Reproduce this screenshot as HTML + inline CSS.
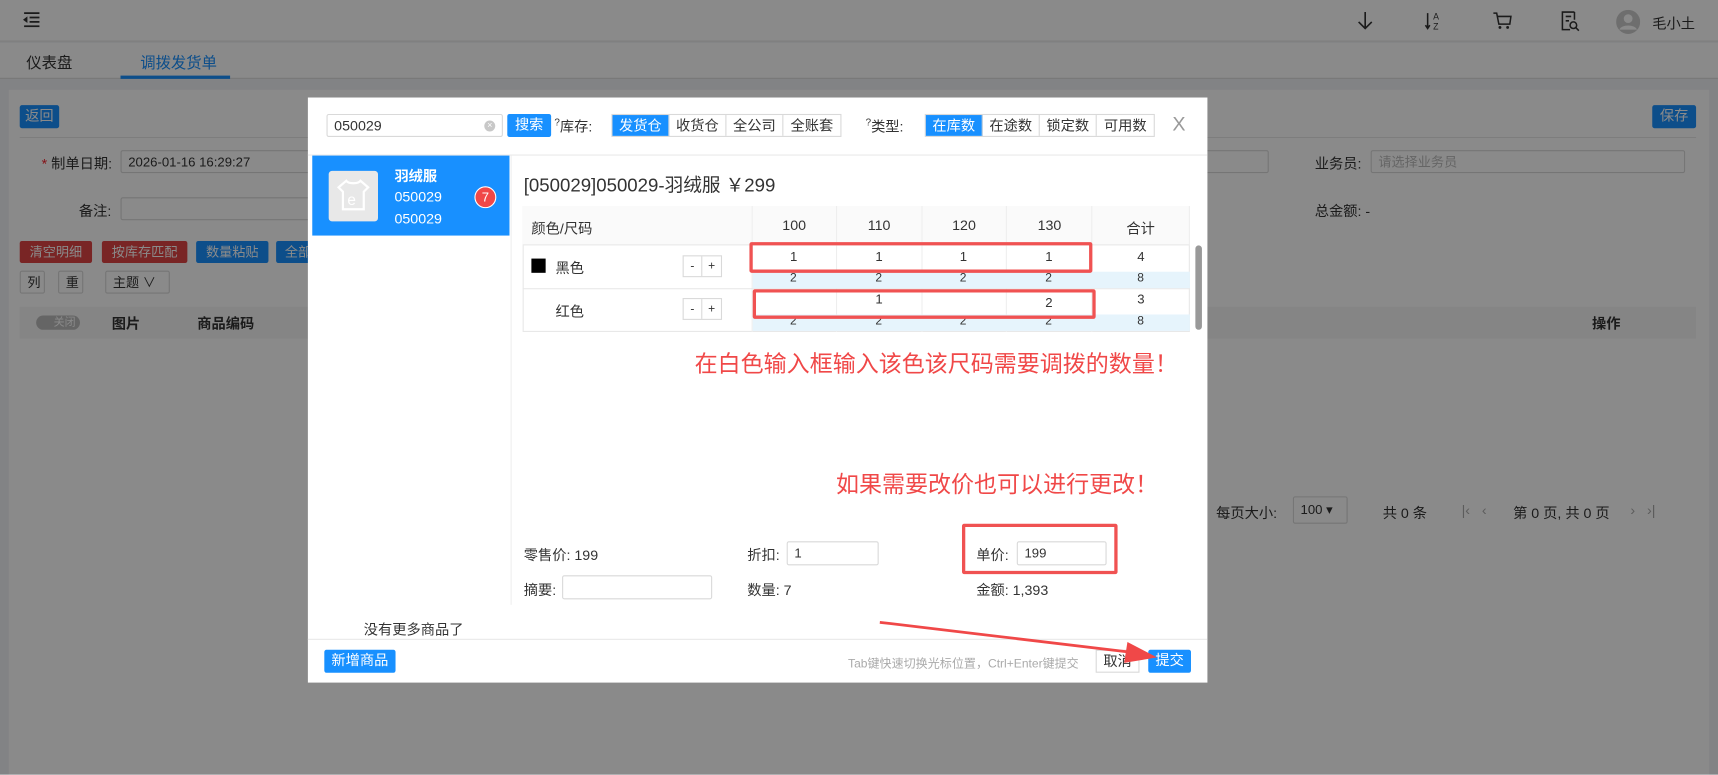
<!DOCTYPE html>
<html><head><meta charset="utf-8"><style>
*{box-sizing:border-box;margin:0;padding:0}
html,body{width:1718px;height:774px;overflow:hidden;background:#f0f2f5}
#w{position:absolute;left:0;top:0;width:1568px;height:707px;transform:scale(1.09566);transform-origin:0 0;font-family:"Liberation Sans","Noto Sans CJK SC",sans-serif;font-size:13px;color:#333}
.a{position:absolute;white-space:nowrap}
.btn{position:absolute;height:20px;line-height:20px;font-size:12px;color:#fff;text-align:center;border-radius:2px}
.blue{background:#1890ff}.red{background:#e04545}
.inp{position:absolute;background:#fff;border:1px solid #d9d9d9;border-radius:2px;height:22px;line-height:20px;padding-left:6px;font-size:12px}
#ov{position:absolute;left:0;top:0;width:1568px;height:707px;background:rgba(0,0,0,.46)}
#m{position:absolute;left:281px;top:89px;width:821px;height:534px;background:#fff}
.seg{position:absolute;top:15px;height:21px;display:flex;border:1px solid #d9d9d9}
.seg div{width:52px;text-align:center;line-height:19px;font-size:13px;border-right:1px solid #d9d9d9}
.seg div:last-child{border-right:none}
.seg .on{background:#1890ff;color:#fff}
.rb{position:absolute;border:3px solid #f05252;border-radius:2px}
</style></head><body><div id="w">
<div class="a" style="left:0;top:0;width:1568px;height:38px;background:#fff;border-bottom:1px solid #e8e8e8"></div>
<svg class="a" style="left:20px;top:11px" width="18" height="14" viewBox="0 0 18 14"><path d="M2 1h14M7 5h9M7 9h9M2 13h14" stroke="#333" stroke-width="1.6"/><path d="M5 4L1 7l4 3z" fill="#333"/></svg>
<svg class="a" style="left:1238px;top:10px" width="16" height="18"><path d="M8 1v15M2 10l6 6 6-6" stroke="#333" stroke-width="1.5" fill="none"/></svg>
<svg class="a" style="left:1299px;top:10px" width="18" height="20"><path d="M4 2v14M2 13l2 3 2-3" stroke="#333" stroke-width="1.4" fill="none"/><text x="9" y="8" font-size="8" fill="#333" font-family="Liberation Sans">A</text><text x="9" y="17" font-size="8" fill="#333" font-family="Liberation Sans">Z</text></svg>
<svg class="a" style="left:1362px;top:11px" width="18" height="16"><path d="M1 1h3l2 10h10l1-7H5" stroke="#333" stroke-width="1.4" fill="none"/><circle cx="7" cy="14" r="1.3" fill="#333"/><circle cx="14" cy="14" r="1.3" fill="#333"/></svg>
<svg class="a" style="left:1424px;top:9px" width="18" height="20"><path d="M13 2H2v16h7M13 2v7M5 6h5M5 10h3" stroke="#333" stroke-width="1.4" fill="none"/><circle cx="12" cy="14" r="3" stroke="#333" stroke-width="1.4" fill="none"/><path d="M14 16l3 3" stroke="#333" stroke-width="1.4"/></svg>
<svg class="a" style="left:1475px;top:9px" width="22" height="22"><circle cx="11" cy="11" r="11" fill="#ccc"/><circle cx="11" cy="8" r="4" fill="#fff"/><path d="M3 18c2-5 14-5 16 0" fill="#fff"/></svg>
<div class="a" style="left:1508px;top:11px;font-size:13px">毛小土</div>
<div class="a" style="left:0;top:39px;width:1568px;height:33px;background:#fff;border-bottom:1px solid #ddd"></div>
<div class="a" style="left:24px;top:47px;font-size:14px">仪表盘</div>
<div class="a" style="left:128px;top:47px;font-size:14px;color:#1890ff">调拨发货单</div>
<div class="a" style="left:110px;top:69px;width:100px;height:3px;background:#1890ff"></div>
<div class="a" style="left:8px;top:82px;width:1552px;height:625px;background:#fff"></div>
<div class="btn blue" style="left:18px;top:96px;width:36px;height:21px;font-size:13px">返回</div>
<div class="btn blue" style="left:1508px;top:96px;width:40px;height:21px;font-size:13px">保存</div>
<div class="a" style="left:18px;top:125px;width:1530px;height:1px;background:#e8e8e8"></div>
<div class="a" style="left:38px;top:139px"><span style="color:#f5222d">*</span> 制单日期:</div>
<div class="inp" style="left:110px;top:137px;width:1048px;height:21px">2026-01-16 16:29:27</div>
<div class="a" style="left:72px;top:182px">备注:</div>
<div class="inp" style="left:110px;top:180px;width:300px;height:21px"></div>
<div class="a" style="left:1200px;top:139px">业务员:</div>
<div class="inp" style="left:1251px;top:137px;width:287px;height:21px;color:#bbb">请选择业务员</div>
<div class="a" style="left:1200px;top:182px">总金额: -</div>
<div class="btn red" style="left:18px;top:220px;width:66px">清空明细</div>
<div class="btn red" style="left:93px;top:220px;width:78px">按库存匹配</div>
<div class="btn blue" style="left:179px;top:220px;width:66px">数量粘贴</div>
<div class="btn blue" style="left:252px;top:220px;width:40px">全部</div>
<div class="inp" style="left:18px;top:247px;width:23px;height:21px;font-size:12px">列</div>
<div class="inp" style="left:53px;top:247px;width:23px;height:21px;font-size:12px">重</div>
<div class="inp" style="left:96px;top:247px;width:59px;height:21px;font-size:12px">主题 ∨</div>
<div class="a" style="left:18px;top:280px;width:1530px;height:29px;background:#f5f5f5"></div>
<div class="a" style="left:33px;top:288px;width:40px;height:13px;border-radius:7px;background:#bbb;color:#fff;font-size:10px;line-height:13px;padding-left:16px">关闭</div>
<div class="a" style="left:102px;top:285px;font-weight:bold">图片</div>
<div class="a" style="left:180px;top:285px;font-weight:bold">商品编码</div>
<div class="a" style="left:1453px;top:285px;font-weight:bold">操作</div>
<div class="a" style="left:1110px;top:458px">每页大小:</div>
<div class="inp" style="left:1180px;top:453px;width:50px;height:25px;line-height:23px">100 ▾</div>
<div class="a" style="left:1262px;top:458px">共 0 条</div>
<div class="a" style="left:1334px;top:458px;color:#aaa">|‹ &nbsp; ‹</div>
<div class="a" style="left:1381px;top:458px">第 0 页, 共 0 页</div>
<div class="a" style="left:1488px;top:458px;color:#aaa">› &nbsp; ›|</div>
<div id="ov"></div>
<div id="m">
<div class="inp" style="left:17px;top:15px;width:161px;height:21px;font-size:13px">050029<span style="position:absolute;right:6px;top:5px;width:10px;height:10px;border-radius:5px;background:#c8c8c8;color:#fff;font-size:8px;line-height:10px;text-align:center">×</span></div>
<div class="btn blue" style="left:182px;top:15px;width:40px;height:21px;font-size:13px">搜索</div>
<div class="a" style="left:225px;top:16px;font-size:13px"><sup style="font-size:9px">?</sup>库存:</div>
<div class="seg" style="left:277px"><div class="on">发货仓</div><div>收货仓</div><div>全公司</div><div>全账套</div></div>
<div class="a" style="left:509px;top:16px;font-size:13px"><sup style="font-size:9px">?</sup>类型:</div>
<div class="seg" style="left:563px"><div class="on">在库数</div><div>在途数</div><div>锁定数</div><div>可用数</div></div>
<div class="a" style="left:789px;top:14px;font-size:18px;color:#999;font-weight:300">X</div>
<div class="a" style="left:0;top:52px;width:821px;height:1px;background:#e8e8e8"></div>
<div class="a" style="left:4px;top:53px;width:180px;height:73px;background:#1890ff"></div>
<div class="a" style="left:19px;top:67px;width:45px;height:46px;background:#e8e8e8;border-radius:3px"></div>
<svg class="a" style="left:25px;top:73px" width="33" height="33"><path d="M10 3l-7 6 4 4v16h19V13l4-4-7-6c-2 3-11 3-13 0z" stroke="#fff" stroke-width="2" fill="none"/><text x="11" y="25" font-size="14" fill="#fff" font-family="Liberation Sans">e</text></svg>
<div class="a" style="left:79px;top:61px;color:#fff;font-weight:bold;font-size:13px">羽绒服</div>
<div class="a" style="left:79px;top:83px;color:#fff;font-size:13px">050029</div>
<div class="a" style="left:79px;top:103px;color:#fff;font-size:13px">050029</div>
<div class="a" style="left:152px;top:81px;width:20px;height:20px;border-radius:10px;background:#f04848;border:1px solid #fff;color:#fff;text-align:center;line-height:18px;font-size:12px">7</div>
<div class="a" style="left:185px;top:53px;width:1px;height:410px;background:#eee"></div>
<div class="a" style="left:197px;top:66px;font-size:17px">[050029]050029-羽绒服 ￥299</div>
<div class="a" style="left:196px;top:99px;width:609px;height:115px;border:1px solid #e8e8e8"></div>
<div class="a" style="left:196px;top:99px;width:609px;height:36px;background:#fafafa;border-bottom:1px solid #e8e8e8"></div>
<div class="a" style="left:204px;top:109px">颜色/尺码</div>
<div class="a" style="left:405px;top:99px;width:1px;height:115px;background:#eee"></div>
<div class="a" style="left:482px;top:99px;width:1px;height:115px;background:#eee"></div>
<div class="a" style="left:560px;top:99px;width:1px;height:115px;background:#eee"></div>
<div class="a" style="left:637px;top:99px;width:1px;height:115px;background:#eee"></div>
<div class="a" style="left:715px;top:99px;width:1px;height:115px;background:#eee"></div>
<div class="a" style="left:804px;top:99px;width:1px;height:36px;background:#eee"></div>
<div class="a" style="left:433px;top:109px">100</div><div class="a" style="left:511px;top:109px">110</div><div class="a" style="left:588px;top:109px">120</div><div class="a" style="left:666px;top:109px">130</div><div class="a" style="left:747px;top:109px">合计</div>
<div class="a" style="left:196px;top:174px;width:609px;height:1px;background:#e8e8e8"></div>
<div class="a" style="left:406px;top:159px;width:399px;height:15px;background:#e6f4fc"></div>
<div class="a" style="left:406px;top:198px;width:399px;height:15px;background:#e6f4fc"></div>
<div class="a" style="left:204px;top:147px;width:13px;height:13px;background:#000"></div>
<div class="a" style="left:226px;top:145px">黑色</div>
<div class="a" style="left:226px;top:185px">红色</div>
<div class="a" style="left:342px;top:144px;width:36px;height:20px;border:1px solid #d9d9d9;display:flex;font-size:11px;line-height:18px;text-align:center"><span style="width:17px;border-right:1px solid #d9d9d9">-</span><span style="width:17px">+</span></div>
<div class="a" style="left:342px;top:183px;width:36px;height:20px;border:1px solid #d9d9d9;display:flex;font-size:11px;line-height:18px;text-align:center"><span style="width:17px;border-right:1px solid #d9d9d9">-</span><span style="width:17px">+</span></div>
<div class="a" style="left:440px;top:138px;font-size:12px">1</div><div class="a" style="left:518px;top:138px;font-size:12px">1</div><div class="a" style="left:595px;top:138px;font-size:12px">1</div><div class="a" style="left:673px;top:138px;font-size:12px">1</div><div class="a" style="left:757px;top:138px;font-size:12px">4</div>
<div class="a" style="left:440px;top:159px;font-size:11px">2</div><div class="a" style="left:518px;top:159px;font-size:11px">2</div><div class="a" style="left:595px;top:159px;font-size:11px">2</div><div class="a" style="left:673px;top:159px;font-size:11px">2</div><div class="a" style="left:757px;top:159px;font-size:11px">8</div>
<div class="a" style="left:518px;top:177px;font-size:12px">1</div><div class="a" style="left:673px;top:180px;font-size:12px">2</div><div class="a" style="left:757px;top:177px;font-size:12px">3</div>
<div class="a" style="left:440px;top:198px;font-size:11px">2</div><div class="a" style="left:518px;top:198px;font-size:11px">2</div><div class="a" style="left:595px;top:198px;font-size:11px">2</div><div class="a" style="left:673px;top:198px;font-size:11px">2</div><div class="a" style="left:757px;top:198px;font-size:11px">8</div>
<div class="a" style="left:810px;top:135px;width:6px;height:77px;border-radius:3px;background:#999"></div>
<div class="rb" style="left:403px;top:132px;width:313px;height:28px"></div>
<div class="rb" style="left:406px;top:175px;width:313px;height:27px"></div>
<div class="a" style="left:353px;top:227px;font-size:21px;color:#f04848">在白色输入框输入该色该尺码需要调拨的数量！</div>
<div class="a" style="left:482px;top:337px;font-size:21px;color:#f04848">如果需要改价也可以进行更改！</div>
<div class="a" style="left:197px;top:407px">零售价: 199</div>
<div class="a" style="left:401px;top:407px">折扣:</div>
<div class="inp" style="left:437px;top:405px;width:84px">1</div>
<div class="rb" style="left:597px;top:389px;width:142px;height:46px"></div>
<div class="a" style="left:610px;top:407px">单价:</div>
<div class="inp" style="left:647px;top:405px;width:82px">199</div>
<div class="a" style="left:197px;top:439px">摘要:</div>
<div class="inp" style="left:232px;top:436px;width:137px"></div>
<div class="a" style="left:401px;top:439px">数量: 7</div>
<div class="a" style="left:610px;top:439px">金额: 1,393</div>
<div class="a" style="left:51px;top:475px">没有更多商品了</div>
<div class="a" style="left:0;top:494px;width:821px;height:1px;background:#e8e8e8"></div>
<div class="btn blue" style="left:15px;top:504px;width:65px;height:21px;font-size:13px">新增商品</div>
<div class="a" style="left:493px;top:508px;font-size:11px;color:#aaa">Tab键快速切换光标位置，Ctrl+Enter键提交</div>
<div class="a" style="left:719px;top:504px;width:40px;height:21px;border:1px solid #d9d9d9;text-align:center;line-height:19px;font-size:13px">取消</div>
<div class="btn blue" style="left:767px;top:504px;width:39px;height:21px;font-size:13px">提交</div>
<svg class="a" style="left:0;top:0" width="821" height="534"><path d="M522 479L757 507" stroke="#f04848" stroke-width="2.5"/><path d="M775 511L748 497 745 516z" fill="#f04848"/></svg>
</div>
</div></body></html>
